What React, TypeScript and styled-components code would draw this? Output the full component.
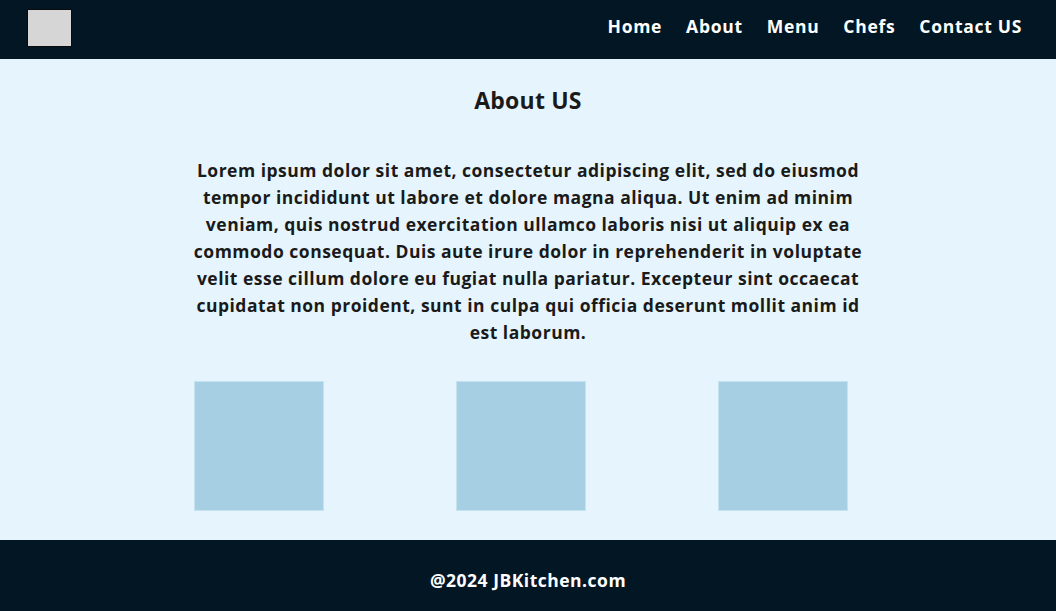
import styled, { createGlobalStyle } from 'styled-components';

const GlobalStyle = createGlobalStyle`
  * { box-sizing: border-box; }
  body {
    margin: 0;
    font-family: 'Open Sans', 'Noto Sans', sans-serif;
    background: #e6f5fd;
  }
`;

const Header = styled.header`
  height: 59px;
  background: #031624;
  display: flex;
  align-items: center;
  justify-content: space-between;
  padding: 0 34px 0 27px;
`;

const Logo = styled.div`
  width: 45px;
  height: 38px;
  margin-bottom: 3px;
  background: #d6d6d6;
  border: 1px solid #0a0a0a;
`;

const Nav = styled.nav`
  display: flex;
  gap: 24px;
  padding-bottom: 7px;
`;

const NavLink = styled.a`
  color: #ffffff;
  font-weight: 700;
  font-size: 17.5px;
  text-decoration: none;
  letter-spacing: 0.7px;
`;

const Main = styled.main`
  height: 481px;
  background: #e6f5fd;
  padding-top: 26px;
  display: flex;
  flex-direction: column;
  align-items: center;
`;

const Title = styled.h1`
  margin: 0;
  font-size: 23px;
  font-weight: 700;
  color: #1a1a1a;
  letter-spacing: 0.2px;
  line-height: 30px;
`;

const Text = styled.p`
  margin: 42px 0 0;
  width: 676px;
  text-align: center;
  font-size: 17.5px;
  font-weight: 700;
  line-height: 27px;
  color: #1a1a1a;
  letter-spacing: 0.5px;
`;

const Gallery = styled.div`
  margin: 35px 0 0;
  display: flex;
  gap: 132px;
  padding-right: 14px;
`;

const Tile = styled.div`
  width: 130px;
  height: 130px;
  background: #a6cfe3;
  border: 1px solid #c4e2f0;
`;

const Footer = styled.footer`
  height: 71px;
  background: #031624;
  display: flex;
  align-items: center;
  justify-content: center;
  padding-top: 8px;
`;

const FooterText = styled.span`
  color: #ffffff;
  font-size: 17.5px;
  font-weight: 700;
  letter-spacing: 0.5px;
`;

const links = ['Home', 'About', 'Menu', 'Chefs', 'Contact US'];

export default function App() {
  return (
    <>
      <GlobalStyle />
      <Header>
        <Logo />
        <Nav>
          {links.map((l) => (
            <NavLink key={l} href="#">{l}</NavLink>
          ))}
        </Nav>
      </Header>
      <Main>
        <Title>About US</Title>
        <Text>
          Lorem ipsum dolor sit amet, consectetur adipiscing elit, sed do eiusmod tempor incididunt ut labore et
          dolore magna aliqua. Ut enim ad minim veniam, quis nostrud exercitation ullamco laboris nisi ut aliquip ex
          ea commodo consequat. Duis aute irure dolor in reprehenderit in voluptate velit esse cillum dolore eu fugiat
          nulla pariatur. Excepteur sint occaecat cupidatat non proident, sunt in culpa qui officia deserunt mollit
          anim id est laborum.
        </Text>
        <Gallery>
          <Tile />
          <Tile />
          <Tile />
        </Gallery>
      </Main>
      <Footer>
        <FooterText>@2024 JBKitchen.com</FooterText>
      </Footer>
    </>
  );
}
